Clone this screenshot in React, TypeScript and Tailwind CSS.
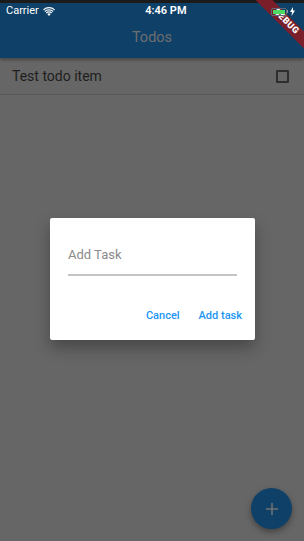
import React from 'react'

const sans = { fontFamily: 'Roboto, "Liberation Sans", Arial, sans-serif' }

function StatusBar() {
  return (
    <div className="relative z-20 h-5 text-white">
      <div className="flex h-full items-center px-[6px] pt-[3px] text-[11px]">
        <span className="flex items-center gap-[4px]">
          Carrier
          <svg width="12" height="9" viewBox="0 0 12 9" fill="white">
            <path d="M6 9 L4.3 7 A2.6 2.6 0 0 1 7.7 7 Z" />
            <path d="M2.9 5.6 A4.6 4.6 0 0 1 9.1 5.6 L8.3 6.5 A3.4 3.4 0 0 0 3.7 6.5 Z" />
            <path d="M1.4 4 A6.8 6.8 0 0 1 10.6 4 L9.8 4.9 A5.6 5.6 0 0 0 2.2 4.9 Z" />
            <path d="M0 2.4 A9 9 0 0 1 12 2.4 L11.2 3.3 A7.8 7.8 0 0 0 0.8 3.3 Z" />
          </svg>
        </span>
        <span className="flex-1 text-center font-semibold pl-[6px]">4:46 PM</span>
        <span className="flex items-center gap-[2px] pr-[3px]">
          <span className="flex items-center">
            <span className="flex h-[8px] w-[16px] items-center rounded-[2px] border border-[#5a6c7a] p-[1px]">
              <span className="h-full w-full bg-[#4cd964]" />
            </span>
            <span className="h-[3px] w-[1px] bg-[#8a9aa6]" />
          </span>
          <svg width="5" height="9" viewBox="0 0 5 9" fill="white">
            <path d="M3 0 L0 5 H2 L1.5 9 L5 3.5 H3 Z" />
          </svg>
        </span>
      </div>
    </div>
  )
}

export default function App() {
  return (
    <div className="relative h-[541px] w-[304px] overflow-hidden bg-[#666666]" style={sans}>
      {/* app bar incl. status bar */}
      <div className="relative bg-[#0e4068] shadow-[0_2px_3px_rgba(0,0,0,0.3)]">
        <div className="absolute left-0 right-0 top-0 h-[3px] bg-[#1b1b1b]" />
        <StatusBar />
        <div className="flex h-[38px] items-center justify-center pb-[2px]">
          <span className="text-[14.5px] text-[#6e6e6e]">Todos</span>
        </div>
      </div>

      <div className="flex h-[37px] items-center justify-between border-b border-[#585858] pl-[12px] pr-[15px]">
        <span className="text-[14px] text-[#1e1e1e]">Test todo item</span>
        <span className="h-[13px] w-[13px] rounded-[1px] border-2 border-[#2e2e2e]" />
      </div>

      {/* dialog */}
      <div className="absolute left-[50px] top-[218px] flex h-[122px] w-[205px] flex-col rounded-[2px] bg-white shadow-[0_8px_16px_rgba(0,0,0,0.3)]">
        <div className="px-[18px] pt-[27px]">
          <div className="border-b-2 border-[#c4c4c4] pb-[10px] text-[13px] leading-[19px] text-[#8a8a8a]">Add Task</div>
        </div>
        <div className="flex justify-end gap-[19px] pr-[13px] pt-[32px] text-[11px] leading-[16px] font-medium text-[#2196f3]">
          <span>Cancel</span>
          <span>Add task</span>
        </div>
      </div>

      {/* fab */}
      <div className="absolute left-[251px] top-[488px] flex h-[41px] w-[41px] items-center justify-center rounded-full bg-[#0e4068] shadow-[0_3px_6px_rgba(0,0,0,0.35)]">
        <svg width="14" height="14" viewBox="0 0 14 14" stroke="#707070" strokeWidth="1.6">
          <path d="M7 1 V13 M1 7 H13" />
        </svg>
      </div>

      {/* debug banner */}
      <div className="pointer-events-none absolute left-[241px] top-[16px] z-10 flex h-[12px] w-[90px] rotate-45 items-center justify-center bg-[#7a1e2a] text-[9px] font-black tracking-[0.5px] text-white">
        DEBUG
      </div>
    </div>
  )
}
